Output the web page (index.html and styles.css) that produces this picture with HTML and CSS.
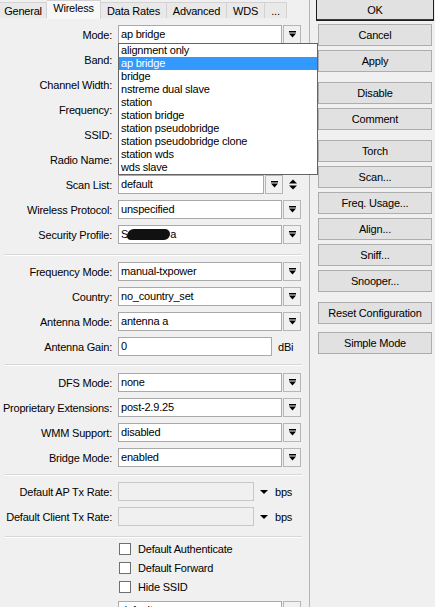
FILE: index.html
```html
<!DOCTYPE html>
<html lang="en">
<head>
  <meta charset="UTF-8" />
  <title>Interface &lt;wlan1&gt;</title>
  <link rel="stylesheet" href="styles.css">
</head>
<body>
  <div class="window">
    <div class="main">
      <div class="tabs">
        <span class="tab t-general">General</span>
        <span class="tab active t-wireless">Wireless</span>
        <span class="tab t-rates">Data Rates</span>
        <span class="tab t-adv">Advanced</span>
        <span class="tab t-wds">WDS</span>
        <span class="tab t-more">...</span>
      </div>

      <div class="panel">
        <!-- modo, banda, ssid etc. -->
        <div class="group">
          <div class="row">
            <span class="lbl">Mode:</span>
            <div class="combo">
              <div class="field">ap bridge</div>
              <span class="drop-btn"><svg viewBox="0 0 7 7" width="7" height="7"><rect x="0" y="0" width="7" height="1.5"/><polygon points="0,2.5 7,2.5 3.5,6.5"/></svg></span>
              <ul class="list">
                <li>alignment only</li>
                <li class="sel">ap bridge</li>
                <li>bridge</li>
                <li>nstreme dual slave</li>
                <li>station</li>
                <li>station bridge</li>
                <li>station pseudobridge</li>
                <li>station pseudobridge clone</li>
                <li>station wds</li>
                <li>wds slave</li>
              </ul>
            </div>
          </div>
          <!-- estes ficam por baixo da lista aberta -->
          <div class="row">
            <span class="lbl">Band:</span>
            <div class="combo">
              <div class="field"></div>
              <span class="drop-btn"><svg viewBox="0 0 7 7" width="7" height="7"><rect x="0" y="0" width="7" height="1.5"/><polygon points="0,2.5 7,2.5 3.5,6.5"/></svg></span>
            </div>
          </div>
          <div class="row">
            <span class="lbl">Channel Width:</span>
            <div class="combo">
              <div class="field"></div>
              <span class="drop-btn"><svg viewBox="0 0 7 7" width="7" height="7"><rect x="0" y="0" width="7" height="1.5"/><polygon points="0,2.5 7,2.5 3.5,6.5"/></svg></span>
            </div>
          </div>
          <div class="row">
            <span class="lbl">Frequency:</span>
            <div class="combo">
              <div class="field"></div>
              <span class="drop-btn"><svg viewBox="0 0 7 7" width="7" height="7"><rect x="0" y="0" width="7" height="1.5"/><polygon points="0,2.5 7,2.5 3.5,6.5"/></svg></span>
            </div>
          </div>
          <div class="row">
            <span class="lbl">SSID:</span>
            <div class="combo">
              <div class="field"></div>
              <span class="drop-btn"><svg viewBox="0 0 7 7" width="7" height="7"><rect x="0" y="0" width="7" height="1.5"/><polygon points="0,2.5 7,2.5 3.5,6.5"/></svg></span>
            </div>
          </div>
          <div class="row">
            <span class="lbl">Radio Name:</span>
            <div class="combo">
              <div class="field"></div>
            </div>
          </div>
          <div class="row">
            <span class="lbl">Scan List:</span>
            <div class="combo">
              <div class="field w146">default</div>
              <span class="drop-btn"><svg viewBox="0 0 7 7" width="7" height="7"><rect x="0" y="0" width="7" height="1.5"/><polygon points="0,2.5 7,2.5 3.5,6.5"/></svg></span>
              <span class="updown"><svg viewBox="0 0 8 11" width="8" height="11"><polygon points="0,4.5 4,0.5 8,4.5"/><polygon points="0,6.5 8,6.5 4,10.5"/></svg></span>
            </div>
          </div>
          <div class="row">
            <span class="lbl">Wireless Protocol:</span>
            <div class="combo">
              <div class="field">unspecified</div>
              <span class="drop-btn"><svg viewBox="0 0 7 7" width="7" height="7"><rect x="0" y="0" width="7" height="1.5"/><polygon points="0,2.5 7,2.5 3.5,6.5"/></svg></span>
            </div>
          </div>
          <div class="row">
            <span class="lbl">Security Profile:</span>
            <div class="combo">
              <div class="field">S<span class="blot"></span>a</div>
              <span class="drop-btn"><svg viewBox="0 0 7 7" width="7" height="7"><rect x="0" y="0" width="7" height="1.5"/><polygon points="0,2.5 7,2.5 3.5,6.5"/></svg></span>
            </div>
          </div>
        </div>

        <div class="sep s1"></div>

        <div class="group">
          <div class="row">
            <span class="lbl">Frequency Mode:</span>
            <div class="combo">
              <div class="field">manual-txpower</div>
              <span class="drop-btn"><svg viewBox="0 0 7 7" width="7" height="7"><rect x="0" y="0" width="7" height="1.5"/><polygon points="0,2.5 7,2.5 3.5,6.5"/></svg></span>
            </div>
          </div>
          <div class="row">
            <span class="lbl">Country:</span>
            <div class="combo">
              <div class="field">no_country_set</div>
              <span class="drop-btn"><svg viewBox="0 0 7 7" width="7" height="7"><rect x="0" y="0" width="7" height="1.5"/><polygon points="0,2.5 7,2.5 3.5,6.5"/></svg></span>
            </div>
          </div>
          <div class="row">
            <span class="lbl">Antenna Mode:</span>
            <div class="combo">
              <div class="field">antenna a</div>
              <span class="drop-btn"><svg viewBox="0 0 7 7" width="7" height="7"><rect x="0" y="0" width="7" height="1.5"/><polygon points="0,2.5 7,2.5 3.5,6.5"/></svg></span>
            </div>
          </div>
          <div class="row">
            <span class="lbl">Antenna Gain:</span>
            <div class="combo">
              <div class="field w154">0</div>
              <span class="unit">dBi</span>
            </div>
          </div>
        </div>

        <div class="sep s2"></div>

        <div class="group">
          <div class="row">
            <span class="lbl">DFS Mode:</span>
            <div class="combo">
              <div class="field">none</div>
              <span class="drop-btn"><svg viewBox="0 0 7 7" width="7" height="7"><rect x="0" y="0" width="7" height="1.5"/><polygon points="0,2.5 7,2.5 3.5,6.5"/></svg></span>
            </div>
          </div>
          <div class="row">
            <span class="lbl">Proprietary Extensions:</span>
            <div class="combo">
              <div class="field">post-2.9.25</div>
              <span class="drop-btn"><svg viewBox="0 0 7 7" width="7" height="7"><rect x="0" y="0" width="7" height="1.5"/><polygon points="0,2.5 7,2.5 3.5,6.5"/></svg></span>
            </div>
          </div>
          <div class="row">
            <span class="lbl">WMM Support:</span>
            <div class="combo">
              <div class="field">disabled</div>
              <span class="drop-btn"><svg viewBox="0 0 7 7" width="7" height="7"><rect x="0" y="0" width="7" height="1.5"/><polygon points="0,2.5 7,2.5 3.5,6.5"/></svg></span>
            </div>
          </div>
          <div class="row">
            <span class="lbl">Bridge Mode:</span>
            <div class="combo">
              <div class="field">enabled</div>
              <span class="drop-btn"><svg viewBox="0 0 7 7" width="7" height="7"><rect x="0" y="0" width="7" height="1.5"/><polygon points="0,2.5 7,2.5 3.5,6.5"/></svg></span>
            </div>
          </div>
        </div>

        <div class="sep s3"></div>

        <div class="group">
          <div class="row">
            <span class="lbl">Default AP Tx Rate:</span>
            <div class="combo">
              <div class="field w136 disabled"></div>
              <span class="tri"><svg viewBox="0 0 8 4" width="8" height="4"><polygon points="0,0 8,0 4,4"/></svg></span>
              <span class="unit">bps</span>
            </div>
          </div>
          <div class="row">
            <span class="lbl">Default Client Tx Rate:</span>
            <div class="combo">
              <div class="field w136 disabled"></div>
              <span class="tri"><svg viewBox="0 0 8 4" width="8" height="4"><polygon points="0,0 8,0 4,4"/></svg></span>
              <span class="unit">bps</span>
            </div>
          </div>
        </div>

        <div class="sep s4"></div>

        <div class="checks">
          <label class="check"><span class="box"></span>Default Authenticate</label>
          <label class="check"><span class="box"></span>Default Forward</label>
          <label class="check"><span class="box"></span>Hide SSID</label>
        </div>

        <div class="row last">
          <span class="lbl">Multicast Helper:</span>
          <div class="combo">
            <div class="field">default</div>
            <span class="drop-btn"><svg viewBox="0 0 7 7" width="7" height="7"><rect x="0" y="0" width="7" height="1.5"/><polygon points="0,2.5 7,2.5 3.5,6.5"/></svg></span>
          </div>
        </div>
      </div>
    </div>

    <!-- botoes laterais -->
    <div class="side">
      <div class="bgroup">
        <span class="btn default">OK</span>
        <span class="btn">Cancel</span>
        <span class="btn">Apply</span>
      </div>
      <div class="bgroup">
        <span class="btn">Disable</span>
        <span class="btn">Comment</span>
      </div>
      <div class="bgroup">
        <span class="btn">Torch</span>
        <span class="btn">Scan...</span>
        <span class="btn">Freq. Usage...</span>
        <span class="btn">Align...</span>
        <span class="btn">Sniff...</span>
        <span class="btn">Snooper...</span>
      </div>
      <div class="bgroup tight">
        <span class="btn">Reset Configuration</span>
      </div>
      <div class="bgroup">
        <span class="btn">Simple Mode</span>
      </div>
    </div>
  </div>
</body>
</html>
```

FILE: styles.css
```css
* {
  margin: 0;
  padding: 0;
  box-sizing: border-box;
}
html, body {
  width: 435px;
  height: 607px;
  overflow: hidden;
}
body {
  background: #f0f0f0;
  font-family: "Liberation Sans", Arial, sans-serif;
  font-size: 11px;
  letter-spacing: -0.2px;
  color: #000;
}

.window {
  display: flex;
  height: 607px;
}
.main {
  width: 310px;
  flex: none;
  border-right: 1px solid #b4b4b4;
  display: flex;
  flex-direction: column;
}

/* abas */
.tabs {
  display: flex;
  align-items: flex-end;
  height: 18px;
}
.tab {
  height: 16px;
  display: flex;
  align-items: center;
  justify-content: center;
  background: #e9e9e9;
  border: 1px solid #d2d2d2;
  border-left: none;
  border-bottom: none;
  white-space: nowrap;
}
.tab.active {
  height: 19px;
  margin-bottom: -1px;
  align-items: flex-start;
  padding-top: 1px;
  background: #f7f7f7;
  position: relative;
  z-index: 1;
}
.t-general { width: 47px; }
.t-wireless { width: 54px; }
.t-rates { width: 66px; }
.t-adv { width: 60px; }
.t-wds { width: 38px; }
.t-more { width: 22px; }

.panel {
  padding-top: 7px;
  display: flex;
  flex-direction: column;
}
.group {
  display: flex;
  flex-direction: column;
  gap: 6px;
}
.row {
  display: flex;
  align-items: center;
  height: 19px;
  flex: none;
}
.row.last {
  margin-top: 4px;
}
.lbl {
  width: 112px;
  flex: none;
  margin-right: 6px;
  text-align: right;
  white-space: nowrap;
}

.combo {
  position: relative;
  display: flex;
  align-items: center;
}
.field {
  width: 164px;
  height: 19px;
  border: 1px solid #a9a9a9;
  background: #fff;
  padding: 0 2px;
  line-height: 17px;
  white-space: nowrap;
  overflow: hidden;
}
.field.w146 { width: 146px; }
.field.w154 { width: 154px; }
.field.w136 { width: 136px; }
.field.disabled {
  background: #f0f0f0;
  border-color: #c8c8c8;
}
.blot {
  display: inline-block;
  width: 43px;
  height: 11px;
  margin: 0 0 0 -1px;
  vertical-align: -2px;
  background: #111;
  border-radius: 7px 5px 6px 4px;
}

.drop-btn {
  width: 18px;
  height: 19px;
  margin-left: 1px;
  border: 1px solid #b6b6b6;
  background: #f1f1f1;
  display: flex;
  align-items: center;
  justify-content: center;
}
.drop-btn svg,
.updown svg,
.tri svg {
  display: block;
  fill: #000;
}
.updown {
  margin-left: 6px;
}
.tri {
  margin-left: 6px;
}
.unit {
  margin-left: 6px;
}
.tri + .unit {
  margin-left: 7px;
}

/* lista aberta do Mode */
.list {
  position: absolute;
  top: 18px;
  left: 0;
  width: 200px;
  list-style: none;
  background: #fff;
  border: 1px solid #646464;
  z-index: 5;
}
.list li {
  height: 13px;
  line-height: 13px;
  padding-left: 2px;
  white-space: nowrap;
}
.list li.sel {
  background: #3399ff;
  color: #fff;
}

.sep {
  height: 2px;
  border-top: 1px solid #d7d7d7;
  border-bottom: 1px solid #fff;
  margin-left: 5px;
  margin-right: 7px;
  flex: none;
}
.sep.s1 { margin-top: 10px; margin-bottom: 6px; }
.sep.s2 { margin-top: 8px; margin-bottom: 7px; }
.sep.s3 { margin-top: 7px; margin-bottom: 6px; }
.sep.s4 { margin-top: 10px; margin-bottom: 2px; }

.checks {
  display: flex;
  flex-direction: column;
}
.check {
  height: 19px;
  display: flex;
  align-items: flex-start;
  padding-left: 119px;
  line-height: 19px;
}
.check .box {
  width: 12px;
  height: 12px;
  margin-top: 3px;
  margin-right: 7px;
  border: 1px solid #6f6f6f;
  background: #fff;
  flex: none;
}

/* coluna de botoes */
.side {
  width: 114px;
  margin-left: 8px;
  margin-top: -1px;
  display: flex;
  flex-direction: column;
}
.bgroup {
  display: flex;
  flex-direction: column;
  gap: 4px;
  margin-bottom: 10px;
}
.bgroup.tight {
  margin-bottom: 8px;
}
.btn {
  height: 22px;
  border: 1px solid #adadad;
  background: #e1e1e1;
  display: flex;
  align-items: center;
  justify-content: center;
  white-space: nowrap;
}
.btn.default {
  margin: 0 -2px -1px -2px;
  border: 1px solid #1e1e1e;
  box-shadow: inset 0 -1px 0 #3a3a3a;
}
```
